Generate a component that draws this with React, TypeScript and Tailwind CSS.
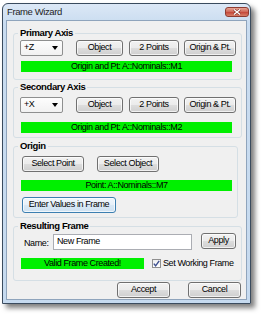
import React from "react";

type BtnProps = {
  label: string;
  className?: string;
  primary?: boolean;
};

const Btn = ({ label, className = "", primary = false }: BtnProps) => {
  const look = primary
    ? "border-[#3c7fb1] bg-[linear-gradient(#f1f7fc_0%,#e6f0f9_50%,#d8e8f5_51%,#cfe2f2_100%)]"
    : "border-[#707070] bg-[linear-gradient(#f2f2f2_0%,#ebebeb_50%,#dddddd_51%,#cfcfcf_100%)]";
  return (
    <div
      className={`h-[16px] rounded-[3px] border ${look} shadow-[inset_0_0_0_1px_rgba(255,255,255,0.7)] flex items-center justify-center shrink-0 ${className}`}
    >
      {label}
    </div>
  );
};

const Combo = ({ value }: { value: string }) => (
  <div className="w-[43px] h-[16px] shrink-0 rounded-[2px] border border-[#8e8f8f] bg-[linear-gradient(#fdfdfd,#f1f1f1)] flex items-center justify-between pl-[3px] pr-[4px]">
    <span>{value}</span>
    <svg width="6" height="4" viewBox="0 0 6 4">
      <polygon points="0,0 6,0 3,4" fill="#000" />
    </svg>
  </div>
);

const Status = ({ text, className = "" }: { text: string; className?: string }) => (
  <div
    className={`h-[11px] bg-[#00f000] flex items-center justify-center leading-none shrink-0 ${className}`}
  >
    {text}
  </div>
);

const Group = ({
  title,
  className = "",
  children,
}: {
  title: string;
  className?: string;
  children: React.ReactNode;
}) => (
  <fieldset
    className={`mr-[4px] rounded-[3px] border border-[#d5dfe5] pl-[6px] pr-[5px] ${className}`}
  >
    <legend className="ml-[-2px] px-[2px] text-[9.5px] font-bold leading-[12px]">
      {title}
    </legend>
    {children}
  </fieldset>
);

const AxisRow = ({ axis }: { axis: string }) => (
  <div className="flex items-center">
    <Combo value={axis} />
    <Btn label="Object" className="ml-[13px] w-[47px]" />
    <Btn label="2 Points" className="ml-[6px] w-[50px]" />
    <Btn label="Origin & Pt." className="ml-[5px] w-[52px]" />
  </div>
);

export default function App() {
  return (
    <div className="w-[263px] h-[318px] bg-white pl-[2px] pt-[3px] font-['Liberation_Sans',Arial,sans-serif] text-[9px] tracking-[-0.4px] text-black">
      <div className="w-[249px] h-[301px] flex flex-col rounded-t-[6px] border border-[#3a4b5e] bg-[linear-gradient(180deg,#dce8f6_0%,#c9dcf0_20px,#c6daef_100%)] shadow-[4px_4px_5px_rgba(0,0,0,0.5)]">
        <div className="h-[16px] flex items-center justify-between pl-[4px] pr-[1px]">
          <span className="text-[9.5px] text-[#1e1e1e]">Frame Wizard</span>
          <div className="w-[24px] h-[10px] rounded-[3px] border border-[#8d3c32] bg-[linear-gradient(#e8a493,#cc6455_50%,#c54a3c_55%,#d8806a)] flex items-center justify-center">
            <svg width="8" height="6" viewBox="0 0 8 6">
              <path d="M1 0.5 L7 5.5 M7 0.5 L1 5.5" stroke="#7a2a20" strokeWidth="2.4" />
              <path d="M1 0.5 L7 5.5 M7 0.5 L1 5.5" stroke="#fff" strokeWidth="1.4" />
            </svg>
          </div>
        </div>
        <div className="mx-[3px] mb-[3px] flex-1 flex flex-col border border-[#8fa4bc] bg-[#f0f0f0] pl-[6px] pr-[4px] pt-[6px]">
          <Group title="Primary Axis" className="pb-[7px]">
            <div className="mt-[1px]">
              <AxisRow axis="+Z" />
            </div>
            <Status text="Origin and Pt: A::Nominals::M1" className="mt-[5px] ml-[1px] w-[211px]" />
          </Group>

          <Group title="Secondary Axis" className="mt-[1px] pb-[4px]">
            <div className="mt-[4px]">
              <AxisRow axis="+X" />
            </div>
            <Status text="Origin and Pt: A::Nominals::M2" className="mt-[9px] ml-[1px] w-[211px]" />
          </Group>

          <Group title="Origin" className="mt-[2px] pb-[4px]">
            <div className="mt-[4px] flex items-center">
              <Btn label="Select Point" className="ml-[2px] w-[62px]" />
              <Btn label="Select Object" className="ml-[13px] w-[62px]" />
            </div>
            <Status text="Point: A::Nominals::M7" className="mt-[8px] ml-[1px] w-[211px]" />
            <Btn label="Enter Values in Frame" primary className="mt-[6px] ml-[2px] w-[94px]" />
          </Group>

          <Group title="Resulting Frame" className="mt-[2px] pb-[10px]">
            <div className="mt-[1px] flex items-start">
              <span className="ml-[4px] w-[29px] mt-[4px] shrink-0">Name:</span>
              <div className="mt-[1px] w-[139px] h-[16px] border border-[#abadb3] bg-white flex items-center pl-[3px] shrink-0">
                New Frame
              </div>
              <Btn label="Apply" className="ml-[9px] w-[35px]" />
            </div>
            <div className="mt-[6px] flex items-center">
              <Status text="Valid Frame Created!" className="ml-[1px] w-[123px]" />
              <div className="ml-[8px] w-[9px] h-[9px] border border-[#8f8f8f] bg-[linear-gradient(#f0f0f0,#fff)] flex items-center justify-center shrink-0">
                <svg width="7" height="7" viewBox="0 0 7 7">
                  <path d="M0.8 3.6 L2.6 5.8 L6.2 0.8" fill="none" stroke="#3d4f8f" strokeWidth="1.4" />
                </svg>
              </div>
              <span className="ml-[2px]">Set Working Frame</span>
            </div>
          </Group>

          <div className="mt-[1px] flex justify-end pr-[1px]">
            <Btn label="Accept" className="w-[53px]" />
            <Btn label="Cancel" className="ml-[18px] w-[53px]" />
          </div>
        </div>
      </div>
    </div>
  );
}
